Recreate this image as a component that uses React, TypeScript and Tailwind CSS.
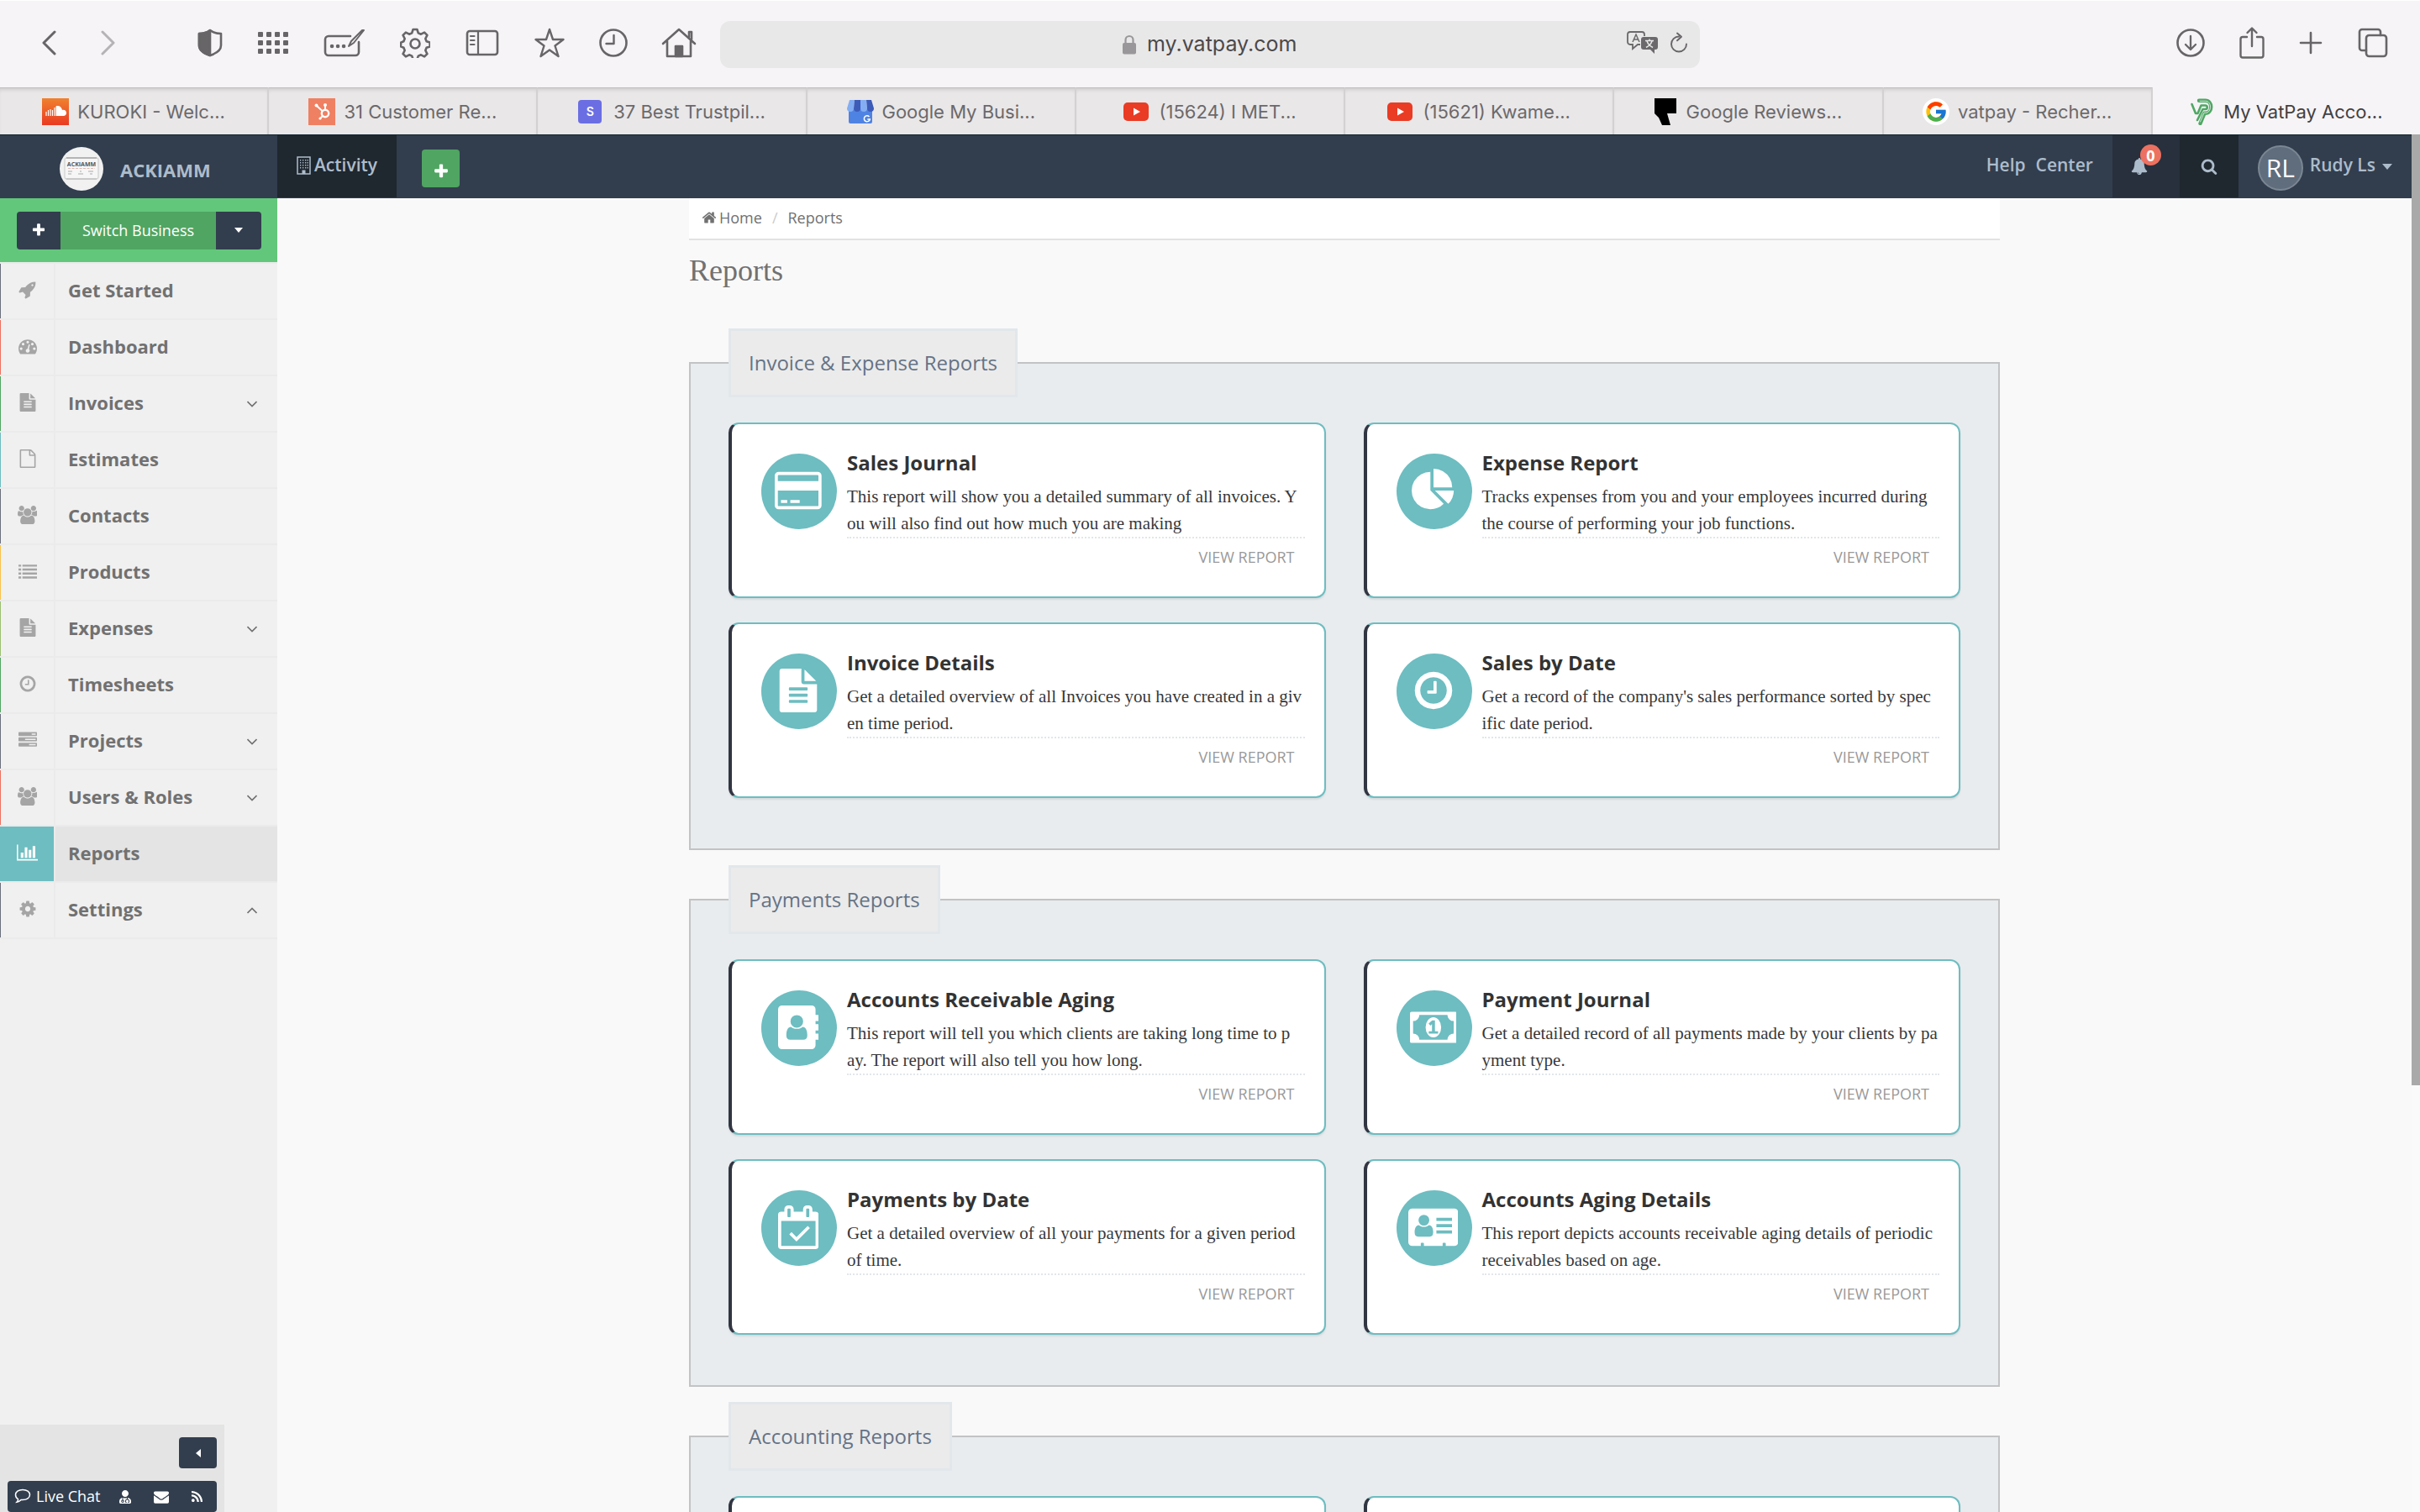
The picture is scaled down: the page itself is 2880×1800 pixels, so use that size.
import React from "react";
import { FcGoogle } from "react-icons/fc";
import { FaUserMd, FaRss } from "react-icons/fa";

/* ---------- glyph data on a 1792-unit em ---------- */
const P = {
  rocket:
    "M1440 448q0-40-28-68t-68-28-68 28-28 68 28 68 68 28 68-28 28-68zm224-288q0 249-75.5 430.5t-253.5 360.5q-81 80-195 176l-20 379q-2 16-16 26l-384 224q-7 4-16 4-12 0-23-9l-64-64q-13-14-8-32l85-276-281-281-276 85q-3 1-9 1-14 0-23-9l-64-64q-17-19-5-39l224-384q10-14 26-16l379-20q96-114 176-195 188-187 358-258t431-71q14 0 24 9.5t10 22.5z",
  gauge:
    "M384 1152q0-53-37.5-90.5t-90.5-37.5-90.5 37.5-37.5 90.5 37.5 90.5 90.5 37.5 90.5-37.5 37.5-90.5zm192-448q0-53-37.5-90.5t-90.5-37.5-90.5 37.5-37.5 90.5 37.5 90.5 90.5 37.5 90.5-37.5 37.5-90.5zm428 481l101-382q6-26-7.5-48.5t-38.5-29.5-48 6.5-30 39.5l-101 382q-60 5-107 43.5t-63 98.5q-20 77 20 146t117 89 146-20 89-117q16-60-6-117t-72-91zm660-33q0-53-37.5-90.5t-90.5-37.5-90.5 37.5-37.5 90.5 37.5 90.5 90.5 37.5 90.5-37.5 37.5-90.5zm-640-640q0-53-37.5-90.5t-90.5-37.5-90.5 37.5-37.5 90.5 37.5 90.5 90.5 37.5 90.5-37.5 37.5-90.5zm448 192q0-53-37.5-90.5t-90.5-37.5-90.5 37.5-37.5 90.5 37.5 90.5 90.5 37.5 90.5-37.5 37.5-90.5zm320 448q0 261-141 483-19 29-54 29h-1402q-35 0-54-29-141-221-141-483 0-182 71-348t191-286 286-191 348-71 348 71 286 191 191 286 71 348z",
  fileText:
    "M1596 476q14 14 28 36h-472v-472q22 14 36 28zm-476 164h544v1056q0 40-28 68t-68 28h-1344q-40 0-68-28t-28-68v-1600q0-40 28-68t68-28h800v544q0 40 28 68t68 28zm160 736v-64q0-14-9-23t-23-9h-704q-14 0-23 9t-9 23v64q0 14 9 23t23 9h704q14 0 23-9t9-23zm0-256v-64q0-14-9-23t-23-9h-704q-14 0-23 9t-9 23v64q0 14 9 23t23 9h704q14 0 23-9t9-23zm0-256v-64q0-14-9-23t-23-9h-704q-14 0-23 9t-9 23v64q0 14 9 23t23 9h704q14 0 23-9t9-23z",
  file:
    "M1596 380q28 28 48 76t20 88v1152q0 40-28 68t-68 28h-1344q-40 0-68-28t-28-68v-1600q0-40 28-68t68-28h896q40 0 88 20t76 48zm-444-244v376h376q-10-29-22-41l-313-313q-12-12-41-22zm384 1528v-1024h-416q-40 0-68-28t-28-68v-416h-768v1536h1280z",
  users:
    "M593 896q-162 5-265 128h-134q-82 0-138-40.5t-56-118.5q0-353 124-353 6 0 43.5 21t97.5 42.5 119 21.5q67 0 133-23-5 37-5 66 0 159 93 290zm1071 637q0 120-73 189.5t-194 69.5h-874q-121 0-194-69.5t-73-189.5q0-53 3.5-103.5t14-109 26.5-108.5 43-97.5 62-81 85.5-53.5 111.5-20q10 0 43 21.5t73 48 107 48 135 21.5 135-21.5 107-48 73-48 43-21.5q61 0 111.5 20t85.5 53.5 62 81 43 97.5 26.5 108.5 14 109 3.5 103.5zm-1024-1277q0 106-75 181t-181 75-181-75-75-181 75-181 181-75 181 75 75 181zm704 384q0 159-112.5 271.5t-271.5 112.5-271.5-112.5-112.5-271.5 112.5-271.5 271.5-112.5 271.5 112.5 112.5 271.5zm576 225q0 78-56 118.5t-138 40.5h-134q-103-123-265-128 93-131 93-290 0-29-5-66 66 23 133 23 59 0 119-21.5t97.5-42.5 43.5-21q124 0 124 353zm-128-609q0 106-75 181t-181 75-181-75-75-181 75-181 181-75 181 75 75 181z",
  list: "M0 256h256v192h-256zM0 640h256v192h-256zM0 1024h256v192h-256zM0 1408h256v192h-256zM384 256h1408v192h-1408zM384 640h1408v192h-1408zM384 1024h1408v192h-1408zM384 1408h1408v192h-1408z",
  clock:
    "M1024 544v448q0 14-9 23t-23 9h-320q-14 0-23-9t-9-23v-64q0-14 9-23t23-9h224v-352q0-14 9-23t23-9h64q14 0 23 9t9 23zm416 352q0-148-73-273t-198-198-273-73-273 73-198 198-73 273 73 273 198 198 273 73 273-73 198-198 73-273zm224 0q0 209-103 385.5t-279.5 279.5-385.5 103-385.5-103-279.5-279.5-103-385.5 103-385.5 279.5-279.5 385.5-103 385.5 103 279.5 279.5 103 385.5z",
  tasks:
    "M1024 1408h640v-128h-640v128zm-384-512h1024v-128h-1024v128zm640-512h384v-128h-384v128zm512 832v256q0 64-64 64h-1664q-64 0-64-64v-256q0-64 64-64h1664q64 0 64 64zm0-512v256q0 64-64 64h-1664q-64 0-64-64v-256q0-64 64-64h1664q64 0 64 64zm0-512v256q0 64-64 64h-1664q-64 0-64-64v-256q0-64 64-64h1664q64 0 64 64z",
  chart:
    "M640 896v512h-256v-512zm384-512v1024h-256v-1024zm1024 1152v128h-2048v-1536h128v1408zm-640-896v768h-256v-768zm384-384v1152h-256v-1152z",
  cog: "M1152 896q0-106-75-181t-181-75-181 75-75 181 75 181 181 75 181-75 75-181zm512-109v222q0 12-8 23t-20 13l-185 28q-19 54-39 91 35 50 107 138 10 12 10 25t-9 23q-27 37-99 108t-94 71q-12 0-26-9l-138-108q-44 23-91 38-16 136-29 186-7 28-36 28h-222q-14 0-24.5-8.5t-11.5-21.5l-28-184q-49-16-90-37l-141 107q-10 9-25 9-14 0-25-11-126-114-165-168-7-10-7-23 0-12 8-23 15-21 51-66.5t54-70.5q-27-50-41-99l-183-27q-13-2-21-12.5t-8-23.5v-222q0-12 8-23t19-13l186-28q14-46 39-92-40-57-107-138-10-12-10-24 0-10 9-23 26-36 98.5-107.5t94.5-71.5q13 0 26 10l138 107q44-23 91-38 16-136 29-186 7-28 36-28h222q14 0 24.5 8.5t11.5 21.5l28 184q49 16 90 37l142-107q9-9 24-9 13 0 25 10 129 119 165 170 7 8 7 22 0 12-8 23-15 21-51 66.5t-54 70.5q26 50 41 98l183 28q13 2 21 12.5t8 23.5z",
  home: "M1472 992v480q0 26-19 45t-45 19h-384v-384h-256v384h-384q-26 0-45-19t-19-45v-480q0-1 .5-3t.5-3l575-474 575 474q1 2 1 6zm223-69l-62 74q-8 9-21 11h-3q-13 0-21-7l-692-577-692 577q-12 8-24 7-13-2-21-11l-62-74q-8-10-7-23.5t11-21.5l719-599q32-26 76-26t76 26l244 204v-195q0-14 9-23t23-9h192q14 0 23 9t9 23v408l219 182q10 8 11 21.5t-7 23.5z",
  plus: "M1600 736v192q0 40-28 68t-68 28h-416v416q0 40-28 68t-68 28h-192q-40 0-68-28t-28-68v-416h-416q-40 0-68-28t-28-68v-192q0-40 28-68t68-28h416v-416q0-40 28-68t68-28h192q40 0 68 28t28 68v416h416q40 0 68 28t28 68z",
  search:
    "M1216 832q0-185-131.5-316.5t-316.5-131.5-316.5 131.5-131.5 316.5 131.5 316.5 316.5 131.5 316.5-131.5 131.5-316.5zm512 832q0 52-38 90t-90 38q-54 0-90-38l-343-342q-179 124-399 124-143 0-273.5-55.5t-225-150-150-225-55.5-273.5 55.5-273.5 150-225 225-150 273.5-55.5 273.5 55.5 225 150 150 225 55.5 273.5q0 220-124 399l343 343q37 37 37 90z",
  bell: "M912 1696q0-16-16-16-59 0-101.5-42.5t-42.5-101.5q0-16-16-16t-16 16q0 73 51.5 124.5t124.5 51.5q16 0 16-16zm816-288q0 52-38 90t-90 38h-448q0 106-75 181t-181 75-181-75-75-181h-448q-52 0-90-38t-38-90q50-42 91-88t85-119.5 74.5-158.5 50-206 19.5-260q0-152 117-282.5t307-158.5q-8-19-8-39 0-40 28-68t68-28 68 28 28 68q0 20-8 39 190 28 307 158.500t117 282.500q0 139 19.500 260t50 206 74.500 158.500 85 119.500 91 88z",
  envelope:
    "M1792 710v794q0 66-47 113t-113 47h-1472q-66 0-113-47t-47-113v-794q44 49 101 87 362 246 497 345 57 42 92.5 65.5t94.5 48 110 24.5h2q51 0 110-24.5t94.5-48 92.5-65.5q170-123 498-345 57-39 100-87zm0-294q0 79-49 151t-122 123q-376 261-468 325-10 7-42.5 31t-54 38.5-52 32.5-57.5 27-50 9h-2q-23 0-50-9t-57.5-27-52-32.5-54-38.5-42.5-31q-91-64-262-182.5t-205-142.5q-62-42-117-115.5t-55-136.5q0-78 41.5-130t118.5-52h1472q65 0 112.5 47t47.5 113z",
  pie: "M768 890l546 546q-106 108-247.5 168t-298.5 60q-209 0-385.5-103t-279.5-279.5-103-385.5 103-385.5 279.5-279.5 385.5-103v762zm187 6h773q0 157-60 298.5t-168 247.5zm709-128h-768v-768q209 0 385.5 103t279.5 279.5 103 385.5z",
  card: "M160 128h1600a160 160 0 0 1 160 160v1216a160 160 0 0 1 -160 160h-1600a160 160 0 0 1 -160-160v-1216a160 160 0 0 1 160-160zM160 256a32 32 0 0 0 -32 32v224h1664v-224a32 32 0 0 0 -32-32zM128 896v608a32 32 0 0 0 32 32h1600a32 32 0 0 0 32-32v-608zM256 1280v128h256v-128zM640 1280v128h384v-128z",
  money:
    "M64 256h1792a64 64 0 0 1 64 64v1152a64 64 0 0 1 -64 64h-1792a64 64 0 0 1 -64-64v-1152a64 64 0 0 1 64-64zM384 384a256 256 0 0 1 -256 256v512a256 256 0 0 1 256 256h1152a256 256 0 0 1 256-256v-512a256 256 0 0 1 -256-256zM960 480a320 416 0 0 1 0 832a320 416 0 0 1 0-832zM768 1152h384v-96h-128v-448h-114l-148 137 77 80 64-57v288h-135z",
  book: "M160 0h1216a160 160 0 0 1 160 160v224h96a32 32 0 0 1 32 32v192a32 32 0 0 1 -32 32h-96v128h96a32 32 0 0 1 32 32v192a32 32 0 0 1 -32 32h-96v128h96a32 32 0 0 1 32 32v192a32 32 0 0 1 -32 32h-96v224a160 160 0 0 1 -160 160h-1216a160 160 0 0 1 -160-160v-1472a160 160 0 0 1 160-160zM768 392a260 260 0 0 0 0 520a260 260 0 0 0 0-520zM528 880c-120 0-190 130-190 350c0 110 60 178 160 178h540c100 0 160-68 160-178c0-220-70-350-190-350c-60 45-140 80-240 80s-180-35-240-80z",
  calendar:
    "M128 256h128v-96a160 160 0 0 1 160-160h64a160 160 0 0 1 160 160v96h384v-96a160 160 0 0 1 160-160h64a160 160 0 0 1 160 160v96h128a128 128 0 0 1 128 128v1280a128 128 0 0 1 -128 128h-1408a128 128 0 0 1 -128-128v-1280a128 128 0 0 1 128-128zM128 640v1024h1408v-1024zM416 128a32 32 0 0 0 -32 32v288a32 32 0 0 0 32 32h64a32 32 0 0 0 32-32v-288a32 32 0 0 0 -32-32zM1184 128a32 32 0 0 0 -32 32v288a32 32 0 0 0 32 32h64a32 32 0 0 0 32-32v-288a32 32 0 0 0 -32-32zM755 1482l-295-295 90-90 205 205 460-460 90 90z",
  vcard:
    "M160 128h1728a160 160 0 0 1 160 160v1216a160 160 0 0 1 -160 160h-352v-96a32 32 0 0 0 -32-32h-64a32 32 0 0 0 -32 32v96h-768v-96a32 32 0 0 0 -32-32h-64a32 32 0 0 0 -32 32v96h-352a160 160 0 0 1 -160-160v-1216a160 160 0 0 1 160-160zM640 384a222 222 0 0 0 0 444a222 222 0 0 0 0-444zM430 810c-110 0-170 120-170 300c0 110 50 170 140 170h480c90 0 140-60 140-170c0-180-60-300-170-300c-50 40-120 70-210 70s-160-30-210-70zM1152 512v128h640v-128zM1152 768v128h640v-128zM1152 1024v128h640v-128z",
};

function Glyph({ d, w = 1792, className }: { d: string; w?: number; className: string }) {
  return (
    <svg viewBox={`0 0 ${w} 1792`} className={className} fill="currentColor" fillRule="evenodd" aria-hidden="true">
      <path d={d} />
    </svg>
  );
}

/* ---------- browser toolbar ---------- */
function Line({ w, h, children, className = "" }: { w: number; h: number; children: React.ReactNode; className?: string }) {
  return (
    <svg
      width={w}
      height={h}
      viewBox={`0 0 ${w} ${h}`}
      className={className}
      fill="none"
      stroke="currentColor"
      strokeWidth="2.6"
      strokeLinecap="round"
      strokeLinejoin="round"
      aria-hidden="true"
    >
      {children}
    </svg>
  );
}

function ToolButton({ label, className = "", children }: { label: string; className?: string; children: React.ReactNode }) {
  return (
    <button type="button" aria-label={label} className={`flex h-10 shrink-0 items-center justify-center ${className}`}>
      {children}
    </button>
  );
}

function Toolbar() {
  return (
    <div className="flex h-[104px] shrink-0 items-center border-t border-white bg-[#f6f4f6] text-[#676567]">
      <div className="flex w-[857px] shrink-0 items-center pb-[3px] pl-12">
        <ToolButton label="Back" className="w-5">
          <Line w={18} h={32}><path d="M16 3L3 16l13 13" strokeWidth="3" /></Line>
        </ToolButton>
        <ToolButton label="Forward" className="ml-[51px] w-5 text-[#b5b3b5]">
          <Line w={18} h={32}><path d="M2 3l13 13L2 29" strokeWidth="3" /></Line>
        </ToolButton>
        <ToolButton label="Privacy report" className="ml-24">
          <Line w={30} h={34}>
            <path d="M15 2c4 3 8 4 13 4v14c0 6-7 10-13 12C9 30 2 26 2 20V6c5 0 9-1 13-4z" />
            <path d="M15 2v30C9 30 2 26 2 20V6c5 0 9-1 13-4z" fill="currentColor" />
          </Line>
        </ToolButton>
        <ToolButton label="Top sites" className="ml-[42px]">
          <svg width="36" height="26" viewBox="0 0 36 26" fill="currentColor" aria-hidden="true">
            {[0, 10, 20].map((y) =>
              [0, 10, 20, 30].map((x) => <rect key={`${x}-${y}`} x={x} y={y} width="6" height="6" rx="1" />)
            )}
          </svg>
        </ToolButton>
        <ToolButton label="AutoFill" className="ml-[42px]">
          <Line w={50} h={34}>
            <path d="M32 9H6a4 4 0 0 0-4 4v15a4 4 0 0 0 4 4h32a4 4 0 0 0 4-4V16" />
            <path d="M48 2L36 17l-6 4 3-6L46 2z" strokeWidth="2" />
            <path d="M10 21h.1M17 21h.1M24 21h.1" strokeWidth="4.5" />
          </Line>
        </ToolButton>
        <ToolButton label="Settings" className="ml-[41px]">
          <Line w={36} h={36}>
            <path d="M15.600 2h4.800l1.400 4.400 3.200 1.300 4.100-2.100 3.300 3.300-2.100 4.100 1.300 3.200 4 1.400v4.800l-4 1.400-1.300 3.200 2.100 4.100-3.300 3.300-4.100-2.100-3.200 1.300-1.400 4h-4.800l-1.400-4-3.200-1.300-4.100 2.100-3.300-3.300 2.100-4.100-1.300-3.200-3.400-1.400v-4.800l3.400-1.400 1.300-3.200-2.100-4.100 3.300-3.300 4.100 2.100 3.200-1.300z" />
            <circle cx="18" cy="19" r="5.500" />
          </Line>
        </ToolButton>
        <ToolButton label="Sidebar" className="ml-[42px]">
          <Line w={40} h={32}>
            <rect x="2" y="2" width="36" height="28" rx="3" />
            <path d="M15 2v28M6 8h4.500M6 13h4.500M6 18h4.500" strokeWidth="2.200" />
          </Line>
        </ToolButton>
        <ToolButton label="Favourites" className="ml-[41px]">
          <Line w={38} h={38}>
            <path d="M19 3l4 12h12.500L25.500 22.500l4 12.500L19 27.500 8.500 35l4-12.500L2.500 15H15z" strokeWidth="2.400" />
          </Line>
        </ToolButton>
        <ToolButton label="History" className="ml-10">
          <Line w={34} h={34}>
            <circle cx="17" cy="17" r="15.500" />
            <path d="M17.500 8v10h-9" strokeWidth="2.400" />
          </Line>
        </ToolButton>
        <ToolButton label="Home page" className="ml-10">
          <Line w={42} h={38}>
            <path d="M2 20L21 3l19 17M7 17v18h28V17" />
            <path d="M33 12V6h3v9" />
            <path d="M17 35V23h8v12z" fill="currentColor" />
          </Line>
        </ToolButton>
      </div>
      <div className="flex h-14 min-w-0 flex-1 items-center rounded-xl bg-[#e9e8e9] px-3.5">
        <div className="w-[73px] shrink-0" />
        <label className="flex flex-1 items-center justify-center gap-3">
          <svg width="18" height="24" viewBox="0 0 18 24" aria-hidden="true" className="shrink-0">
            <path d="M4.500 11V6.500a4.500 4.500 0 0 1 9 0V11" fill="none" stroke="#999799" strokeWidth="2.200" />
            <rect x="1" y="10" width="16" height="13.500" rx="2" fill="#999799" />
          </svg>
          <input
            aria-label="Address"
            defaultValue="my.vatpay.com"
            className="w-[180px] bg-transparent pb-0.5 font-['Inter',sans-serif] text-[25px] leading-8 text-[#4b494b] outline-none"
          />
        </label>
        <div className="flex w-[73px] shrink-0 items-center justify-between pb-1">
          <button type="button" aria-label="Translate">
            <svg width="38" height="28" viewBox="0 0 38 28" fill="none" aria-hidden="true">
              <path d="M16 16H13l-6 5v-5H4a3 3 0 0 1-3-3V4a3 3 0 0 1 3-3h14a3 3 0 0 1 3 3v2" stroke="#6b696b" strokeWidth="1.800" />
              <path d="M7 13l4-9 4 9M8.500 10h5" stroke="#6b696b" strokeWidth="1.500" />
              <path d="M20 7h14a3 3 0 0 1 3 3v9a3 3 0 0 1-3 3h-1v5l-5-5h-8a3 3 0 0 1-3-3v-9a3 3 0 0 1 3-3z" fill="#6b696b" />
              <path d="M22 11.500h10M27 9.500v2M24 12c1 3 4 6 7 7.500M30 12c-1 3-4 6-7 7.500" stroke="#e9e8e9" strokeWidth="1.500" />
            </svg>
          </button>
          <button type="button" aria-label="Reload">
            <Line w={22} h={26}>
              <path d="M11 5.500a9 9 0 1 0 9 9M9 1.500l5 4.300-5 4.500" strokeWidth="1.900" />
            </Line>
          </button>
        </div>
      </div>
      <div className="flex w-[857px] shrink-0 items-center justify-end pr-[38px] pb-[3px]">
        <ToolButton label="Downloads">
          <Line w={34} h={34}>
            <circle cx="17" cy="17" r="15.500" />
            <path d="M17 9v16M11 19l6 6 6-6" strokeWidth="2.300" />
          </Line>
        </ToolButton>
        <ToolButton label="Share" className="ml-10">
          <Line w={32} h={40}>
            <path d="M10 13H5a2.500 2.500 0 0 0-2.500 2.500V35A2.500 2.500 0 0 0 5 37.500h22a2.500 2.500 0 0 0 2.500-2.500V15.500A2.500 2.500 0 0 0 27 13h-5M16 24V3M10.500 8L16 2.500 21.500 8" strokeWidth="2.400" />
          </Line>
        </ToolButton>
        <ToolButton label="New tab" className="ml-10">
          <Line w={28} h={28}><path d="M14 2v24M2 14h24" /></Line>
        </ToolButton>
        <ToolButton label="Tab overview" className="ml-[42px]">
          <Line w={36} h={36}>
            <rect x="10" y="9" width="24" height="25" rx="3.500" />
            <path d="M10 27H5a3 3 0 0 1-3-3V5a3 3 0 0 1 3-3h19a3 3 0 0 1 3 3v4" />
          </Line>
        </ToolButton>
      </div>
    </div>
  );
}

/* ---------- tab strip ---------- */
const SoundCloud = (
  <svg width="32" height="32" viewBox="0 0 32 32" aria-hidden="true">
    <defs>
      <linearGradient id="sc" x1="0" y1="0" x2="0" y2="1">
        <stop offset="0" stopColor="#f0812f" />
        <stop offset="1" stopColor="#ea3a22" />
      </linearGradient>
    </defs>
    <rect width="32" height="32" fill="url(#sc)" />
    <path d="M5 16v5M7.500 14v7M10 13v8M12.500 14v7M15 11v10" stroke="#fff" strokeWidth="1.200" />
    <path d="M16.500 9.500c3-1.500 7 .5 7.500 4.500 3-.8 5 1.200 5 3.500s-1.500 3.500-3.500 3.500h-9z" fill="#fff" />
  </svg>
);
const HubSpot = (
  <svg width="32" height="32" viewBox="0 0 32 32" aria-hidden="true">
    <rect width="32" height="32" fill="#ef8062" />
    <circle cx="20" cy="18" r="4.200" fill="none" stroke="#fff" strokeWidth="2.400" />
    <path d="M20 14V9M17 15.500L10 9M17 21l-3 3" stroke="#fff" strokeWidth="1.900" />
    <circle cx="20" cy="8" r="2" fill="#fff" />
    <circle cx="9.500" cy="8.500" r="2" fill="#fff" />
    <circle cx="14" cy="24" r="1.600" fill="#fff" />
  </svg>
);
const LetterS = (
  <span className="mr-1 flex size-7 items-center justify-center rounded bg-[#6b6ee3] font-['Inter',sans-serif] text-sm font-semibold text-white">S</span>
);
const Shop = (
  <svg width="32" height="28" viewBox="0 0 32 28" aria-hidden="true">
    <path d="M2 10h28v16a2 2 0 0 1-2 2H4a2 2 0 0 1-2-2z" fill="#4f83e3" />
    <path d="M3 0h6L8 10a4 4 0 0 1-8 0z" fill="#84aef3" />
    <path d="M9 0h7v10a4 4 0 0 1-8 0z" fill="#3d5bb8" />
    <path d="M16 0h7l1 10a4 4 0 0 1-8 0z" fill="#84aef3" />
    <path d="M23 0h6l3 10a4 4 0 0 1-8 0z" fill="#3d5bb8" />
    <path d="M26.500 20a3.500 3.500 0 1 0 .8 3h-3" fill="none" stroke="#fff" strokeWidth="1.500" />
  </svg>
);
const YouTube = (
  <svg width="30" height="22" viewBox="0 0 30 22" className="mr-0.5" aria-hidden="true">
    <rect width="30" height="22" rx="5" fill="#ea3b24" />
    <path d="M12 6.500l8 4.500-8 4.500z" fill="#fff" />
  </svg>
);
const Quote = (
  <svg width="26" height="32" viewBox="0 0 26 32" className="mr-0.5" aria-hidden="true">
    <path d="M0 0h26v18H15l4 14H9L5 23 0 18z" fill="#000" />
  </svg>
);
const GoogleMark = (
  <span className="flex size-8 items-center justify-center rounded-full bg-white">
    <FcGoogle className="size-7" />
  </span>
);
const VatPay = (
  <svg width="28" height="32" viewBox="0 0 28 32" fill="none" strokeLinejoin="round" strokeLinecap="round" className="mr-0.5" aria-hidden="true">
    <path d="M2.500 7l4.500 11h2.500l4-9.500h5c3 0 3 4.500 0 4.500h-3L9 26" stroke="#4fa764" strokeWidth="2.600" />
    <path d="M11 2.800h7.500c9 0 9 15 0 15h-1L12.500 30" stroke="#4fa764" strokeWidth="4.400" />
    <path d="M12 3.300h6.500c8 0 8 14 0 14h-1.500L12.500 28" stroke="#f6f4f6" strokeWidth=".8" />
  </svg>
);

const tabs = [
  { icon: SoundCloud, text: "KUROKI - Welc..." },
  { icon: HubSpot, text: "31 Customer Re..." },
  { icon: LetterS, text: "37 Best Trustpil..." },
  { icon: Shop, text: "Google My Busi..." },
  { icon: YouTube, text: "(15624) I MET..." },
  { icon: YouTube, text: "(15621) Kwame..." },
  { icon: Quote, text: "Google Reviews..." },
  { icon: GoogleMark, text: "vatpay - Recher..." },
  { icon: VatPay, text: "My VatPay Acco...", active: true },
];

function TabStrip() {
  return (
    <div className="flex h-14 shrink-0 font-['Inter',sans-serif] text-[22px]">
      {tabs.map((t) => (
        <button
          key={t.text}
          type="button"
          className={
            t.active
              ? "flex min-w-0 flex-1 items-center justify-center gap-2.5 bg-[#f6f4f6] pt-0.5 text-[#414042]"
              : "flex min-w-0 flex-1 items-center justify-center gap-2.5 border-t border-r-2 border-t-[#bfbebf] border-r-[#d3d1d2] bg-[#e9e7e8] pt-px text-[#6b696b] shadow-[inset_0_4px_4px_-2px_rgba(0,0,0,0.12)]"
          }
        >
          {t.icon}
          <span className="whitespace-nowrap">{t.text}</span>
        </button>
      ))}
    </div>
  );
}

/* ---------- application header ---------- */
function Building() {
  return (
    <svg width="17" height="22" viewBox="0 0 17 22" aria-hidden="true">
      <rect x="1" y="1" width="15" height="20" fill="none" stroke="#aebdcc" strokeWidth="1.500" />
      {[4, 7, 10, 13].map((y) => [4, 7, 10, 12.5].map((x) => <rect key={`${x}-${y}`} x={x} y={y} width="1.300" height="1.500" fill="#aebdcc" />))}
      <rect x="6.500" y="16.500" width="4" height="4.500" fill="#aebdcc" />
    </svg>
  );
}

function AppHeader() {
  return (
    <header className="flex h-[76px] shrink-0 items-start border-t border-[#12222e] bg-[#323e4e] text-[#adbccb]">
      <a href="#brand" className="flex h-[75px] w-[330px] shrink-0 items-center pt-1 pl-[71px] text-[22px] font-bold">
        <svg width="52" height="52" viewBox="0 0 52 52" aria-hidden="true">
          <circle cx="26" cy="26" r="26" fill="#f1f1f1" />
          <rect x="6" y="13" width="40" height="25" rx="2" fill="#f6f6f6" stroke="#c8c8c8" />
          <path d="M8 13h36" stroke="#8b8b8b" />
          <path d="M8 38h36" stroke="#b4b4b4" />
          <path d="M10 25.500h32" stroke="#dcb9b2" strokeWidth="1" strokeDasharray="3 1.500" />
          <path d="M10 29h5M10 32h4M22 32h6M24 29h2M34 29h6M36 32h3" stroke="#c4c4c4" strokeWidth="1.500" />
          <text x="26" y="22.500" textAnchor="middle" fontSize="7" fontFamily="Open Sans, sans-serif" fill="#555">ACKIAMM</text>
        </svg>
        <span className="pt-1 pl-5">ACKIAMM</span>
      </a>
      <a href="#activity" className="flex h-[74px] w-[142px] items-center justify-center gap-1 bg-[#1f272f] pb-0.5 text-[21px] font-semibold">
        <Building />
        Activity
      </a>
      <button type="button" aria-label="Add" className="mt-[17px] ml-[30px] flex h-[45px] w-[45px] items-center justify-center rounded bg-[#50a562] text-white">
        <Glyph d={P.plus} className="mt-1.5 size-5" />
      </button>
      <nav className="ml-auto flex h-[74px] items-center text-[21px] font-semibold">
        <a href="#help" className="mr-[23px] flex gap-3 pb-0.5">
          <span>Help</span>
          <span>Center</span>
        </a>
        <button type="button" aria-label="Notifications" className="relative flex h-full w-20 items-center bg-[#27303c] pl-[22px]">
          <Glyph d={P.bell} className="size-5" />
          <span className="absolute top-[11px] left-[33px] flex size-[25px] items-center justify-center rounded-full bg-[#ed7160] text-lg leading-none font-bold text-white">0</span>
        </button>
        <button type="button" aria-label="Search" className="flex h-full w-[70px] items-center justify-center bg-[#1f272f]">
          <Glyph d={P.search} className="size-5" />
        </button>
        <button type="button" className="flex h-full items-center pr-[23px] pl-[23px]">
          <span className="mt-1 flex size-[54px] items-center justify-center rounded-full border-2 border-[#7b8792] bg-[#5f6d7d] text-3xl font-normal text-white">RL</span>
          <span className="pb-0.5 pl-2">Rudy Ls</span>
          <svg width="12" height="7" viewBox="0 0 12 7" className="ml-2" aria-hidden="true">
            <path d="M0 0h12L6 7z" fill="#adbccb" />
          </svg>
        </button>
      </nav>
    </header>
  );
}

/* ---------- sidebar ---------- */
const menu = [
  { text: "Get Started", d: P.rocket, bar: "border-l-[#6b6f7b]" },
  { text: "Dashboard", d: P.gauge, bar: "border-l-[#ed7160]" },
  { text: "Invoices", d: P.fileText, bar: "border-l-[#50a562]", arrow: "down" },
  { text: "Estimates", d: P.file, bar: "border-l-[#6dbdc1]" },
  { text: "Contacts", d: P.users, w: 1920, bar: "border-l-[#6b6f7b]" },
  { text: "Products", d: P.list, bar: "border-l-[#f9c14a]" },
  { text: "Expenses", d: P.fileText, bar: "border-l-[#9cc070]", arrow: "down" },
  { text: "Timesheets", d: P.clock, bar: "border-l-[#50a562]" },
  { text: "Projects", d: P.tasks, bar: "border-l-[#6b6f7b]", arrow: "down" },
  { text: "Users & Roles", d: P.users, w: 1920, bar: "border-l-[#ed7160]", arrow: "down" },
  { text: "Reports", d: P.chart, w: 2048, bar: "border-l-[#6dbdc1]", active: true },
  { text: "Settings", d: P.cog, bar: "border-l-[#6b6f7b]", arrow: "up" },
];

function Sidebar() {
  return (
    <aside className="flex w-[330px] shrink-0 flex-col bg-[#f0f0f0]">
      <div className="flex h-[76px] shrink-0 items-center bg-[#62c77a] pl-5">
        <div className="flex h-[45px] w-[291px] overflow-hidden rounded text-white">
          <button type="button" aria-label="New business" className="flex w-[52px] items-center justify-center bg-[#323e4e]">
            <Glyph d={P.plus} className="size-[18px]" />
          </button>
          <button type="button" className="flex-1 bg-[#50a562] text-lg">Switch Business</button>
          <button type="button" aria-label="Choose business" className="flex w-[54px] items-center justify-center bg-[#323e4e]">
            <svg width="10" height="6" viewBox="0 0 10 6" aria-hidden="true"><path d="M0 0h10L5 6z" fill="#fff" /></svg>
          </button>
        </div>
      </div>
      <nav className="border-t-2 border-[#ebebeb]">
        {menu.map((m) => (
          <a key={m.text} href={`#${m.text}`} className="flex h-[67px] border-b-2 border-[#ebebeb]">
            <span
              className={`flex w-[66px] shrink-0 items-center justify-center border-r-2 border-l border-r-[#ebebeb] ${m.bar} ${
                m.active ? "bg-[#6dbdc1] text-white" : "text-[#a5a5a5]"
              }`}
            >
              <Glyph d={m.d} w={m.w} className="mb-[3px] h-[22px]" />
            </span>
            <span
              className={`flex flex-1 items-center pr-6 pb-0.5 pl-[15px] text-[22px] font-bold text-[#717171] ${m.active ? "bg-[#e4e4e4]" : ""}`}
            >
              {m.text}
              {m.arrow && (
                <svg width="12" height="8" viewBox="0 0 12 8" className="mt-0.5 ml-auto" fill="none" stroke="#717171" strokeWidth="1.600" aria-hidden="true">
                  <path d={m.arrow === "down" ? "M.5 1L6 6.500 11.500 1" : "M.5 7L6 1.500 11.500 7"} />
                </svg>
              )}
            </span>
          </a>
        ))}
      </nav>
      <div className="mt-auto flex h-[104px] w-[267px] shrink-0 flex-col items-end justify-between bg-[#e4e4e4] pt-[15px] pr-[9px] pl-[9px] text-white">
        <button type="button" aria-label="Collapse menu" className="flex h-[37px] w-[45px] items-center justify-center rounded bg-[#323e4e]">
          <svg width="6" height="10" viewBox="0 0 6 10" aria-hidden="true"><path d="M6 0v10L0 5z" fill="#fff" /></svg>
        </button>
        <div className="flex h-[37px] w-full items-center rounded bg-[#323e4e] pl-2">
          <button type="button" className="flex items-center gap-1.5 pb-px text-lg">
            <svg width="20" height="18" viewBox="0 0 20 18" fill="none" stroke="#fff" strokeWidth="1.500" aria-hidden="true">
              <path d="M10 1.500c5 0 8.500 2.500 8.500 6s-3.500 6-8.500 6l-2-.1c-1.200 1.300-3 2.600-5 2.900.9-1 1.500-2.200 1.600-3.500C2.600 11.600 1.500 9.800 1.500 7.500c0-3.500 3.500-6 8.500-6z" />
            </svg>
            Live Chat
          </button>
          <button type="button" aria-label="Support" className="ml-[21px]"><FaUserMd className="size-4" /></button>
          <button type="button" aria-label="Mail" className="ml-[26px]"><Glyph d={P.envelope} className="size-[18px]" /></button>
          <button type="button" aria-label="Feed" className="ml-[26px]"><FaRss className="size-[15px]" /></button>
        </div>
      </div>
    </aside>
  );
}

/* ---------- reports ---------- */
type Report = { title: string; lines: [string, string]; d: string; w?: number };

const sections: { name: string; reports: Report[] }[] = [
  {
    name: "Invoice & Expense Reports",
    reports: [
      { title: "Sales Journal", lines: ["This report will show you a detailed summary of all invoices. Y", "ou will also find out how much you are making"], d: P.card, w: 1920 },
      { title: "Expense Report", lines: ["Tracks expenses from you and your employees incurred during", "the course of performing your job functions."], d: P.pie },
      { title: "Invoice Details", lines: ["Get a detailed overview of all Invoices you have created in a giv", "en time period."], d: P.fileText },
      { title: "Sales by Date", lines: ["Get a record of the company's sales performance sorted by spec", "ific date period."], d: P.clock },
    ],
  },
  {
    name: "Payments Reports",
    reports: [
      { title: "Accounts Receivable Aging", lines: ["This report will tell you which clients are taking long time to p", "ay. The report will also tell you how long."], d: P.book, w: 1664 },
      { title: "Payment Journal", lines: ["Get a detailed record of all payments made by your clients by pa", "yment type."], d: P.money, w: 1920 },
      { title: "Payments by Date", lines: ["Get a detailed overview of all your payments for a given period", "of time."], d: P.calendar, w: 1664 },
      { title: "Accounts Aging Details", lines: ["This report depicts accounts receivable aging details of periodic", "receivables based on age."], d: P.vcard, w: 2048 },
    ],
  },
];

const cardBox = "rounded-xl border-2 border-l-4 border-[#6dbdc1] border-l-[#323642] bg-white shadow-[0_2px_2px_rgba(0,0,0,0.08)]";

function ReportCard({ r }: { r: Report }) {
  return (
    <article className={`flex gap-3 pt-[30px] pr-[23px] pb-[33px] pl-[35px] ${cardBox}`}>
      <div className="mt-[5px] flex size-[90px] shrink-0 items-center justify-center rounded-full bg-[#6dbdc1] text-white">
        <Glyph d={r.d} w={r.w} className="mr-0.5 mb-0.5 h-[52px]" />
      </div>
      <div className="min-w-0 flex-1">
        <h2 className="text-2xl leading-8 font-bold text-[#333]">{r.title}</h2>
        <p className="mt-2 border-b-2 border-dotted border-[#e2e6ea] font-['Liberation_Serif',serif] text-[21px] leading-8 whitespace-nowrap text-[#37393b]">
          {r.lines[0]}
          <br />
          {r.lines[1]}
        </p>
        <div className="flex justify-end pt-2 pr-3">
          <a href={`#${r.title}`} className="text-lg leading-7 text-[#999]">VIEW REPORT</a>
        </div>
      </div>
    </article>
  );
}

function ReportSection({ name, children }: { name: string; children: React.ReactNode }) {
  return (
    <fieldset className="mb-[18px] border-2 border-[#c2c3c4] bg-[#e8ecef] px-[45px] pt-[30px] pb-[60px]">
      <legend className="h-[82px] border-[3px] border-[#e2e7eb] bg-[#ebebeb] px-[21px] pt-5 text-2xl leading-9 text-[#657386]">{name}</legend>
      <div className="grid grid-cols-2 gap-x-[45px] gap-y-[29px]">{children}</div>
    </fieldset>
  );
}

export default function App() {
  return (
    <div className="flex h-screen flex-col overflow-hidden bg-[#f9f9f9] font-['Open_Sans',sans-serif]">
      <Toolbar />
      <TabStrip />
      <div className="flex min-h-0 flex-1">
        <div className="flex min-w-0 flex-1 flex-col">
          <AppHeader />
          <div className="flex min-h-0 flex-1">
            <Sidebar />
            <main className="min-w-0 flex-1 overflow-hidden">
              <div className="mx-auto max-w-[1560px]">
                <nav aria-label="Breadcrumb" className="flex h-[50px] items-center border-b-2 border-[#e2e2e2] bg-white pb-0.5 pl-[15px] text-lg text-[#717171]">
                  <a href="#home" className="flex items-center gap-[3px]">
                    <Glyph d={P.home} className="size-[18px]" />
                    Home
                  </a>
                  <span className="px-3 text-[#ccc]">/</span>
                  <span>Reports</span>
                </nav>
                <h1 className="mt-3 mb-[45px] font-['Liberation_Serif',serif] text-4xl leading-[48px] text-[#717171]">Reports</h1>
                {sections.map((s) => (
                  <ReportSection key={s.name} name={s.name}>
                    {s.reports.map((r) => (
                      <ReportCard key={r.title} r={r} />
                    ))}
                  </ReportSection>
                ))}
                <ReportSection name="Accounting Reports">
                  <div className={`h-52 ${cardBox}`} />
                  <div className={`h-52 ${cardBox}`} />
                </ReportSection>
              </div>
            </main>
          </div>
        </div>
        <div className="w-2.5 shrink-0 bg-[#fafafa]">
          <div className="h-[69%] bg-[#a9a9a9]" />
        </div>
      </div>
    </div>
  );
}
